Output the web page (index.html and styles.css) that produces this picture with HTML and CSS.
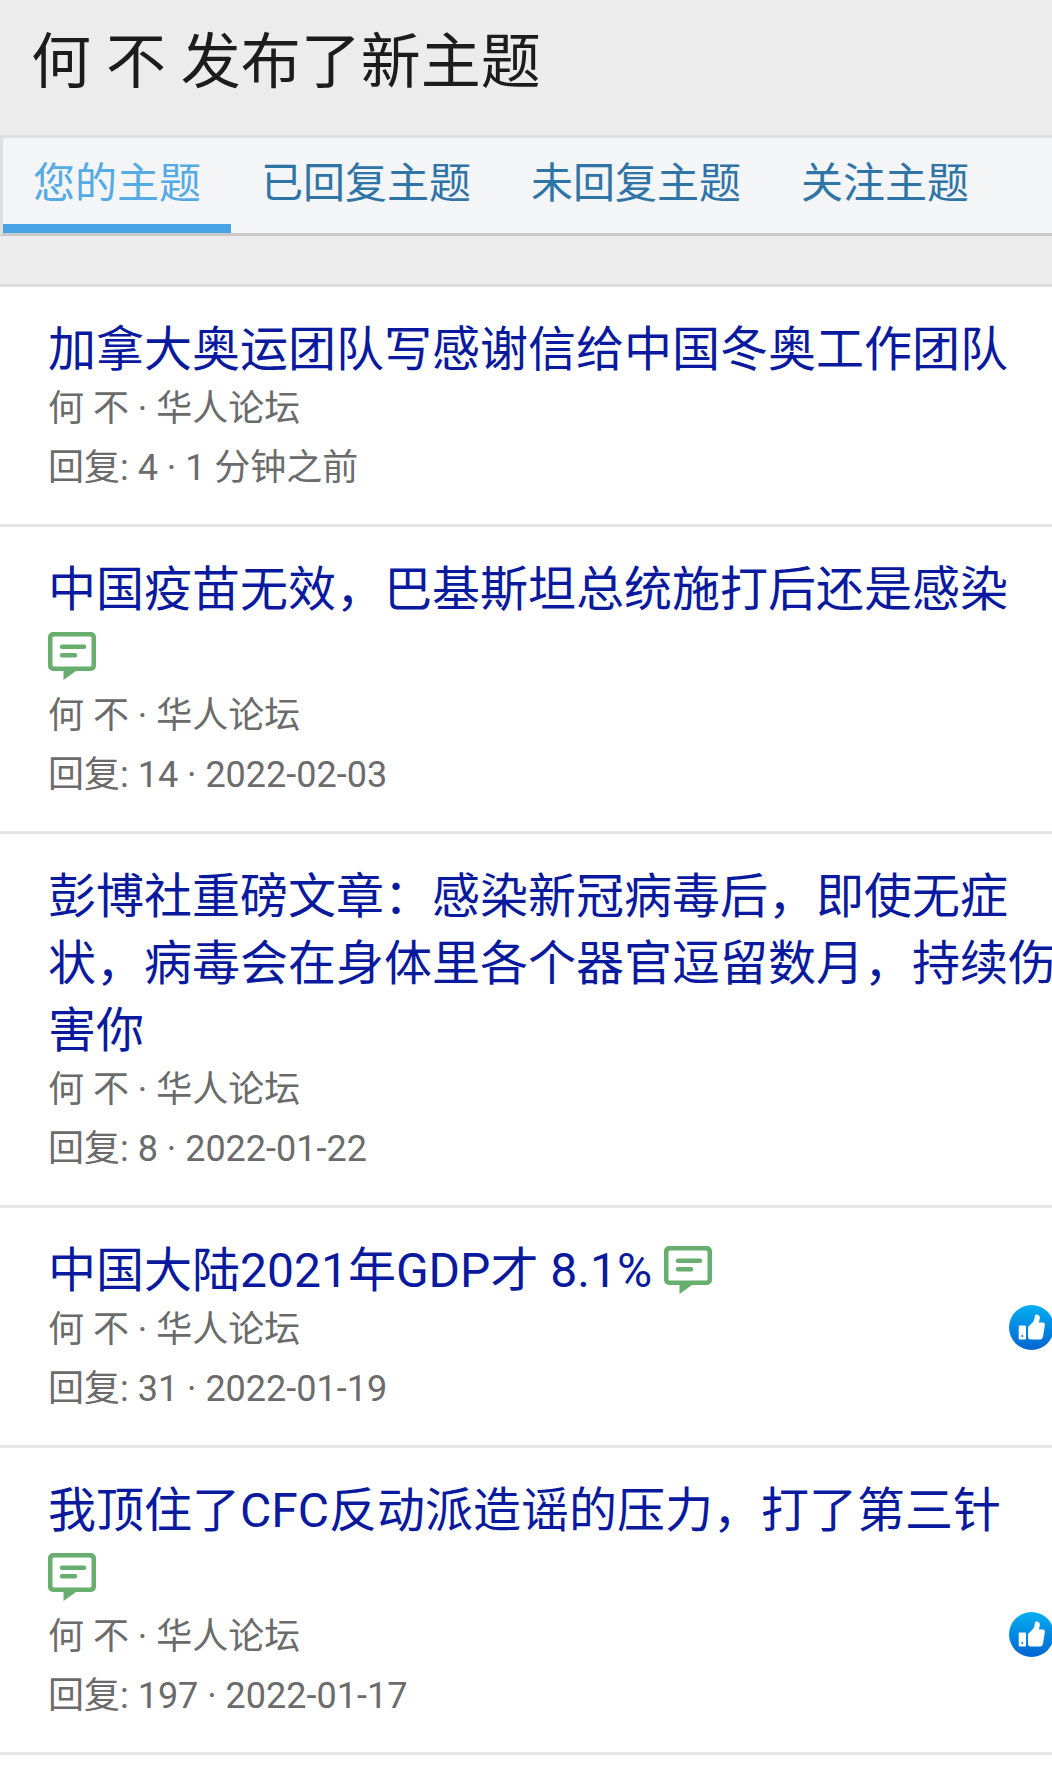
FILE: index.html
```html
<!DOCTYPE html>
<html lang="zh">
<head>
<meta charset="UTF-8" />
<title>何 不 发布了新主题</title>
<link rel="stylesheet" href="styles.css">
</head>
<body>
<svg class="defs" width="0" height="0">
  <defs>
    <linearGradient id="likeFill" x1="0" y1="0" x2="0" y2="1">
      <stop offset="0" stop-color="#04aef2"/>
      <stop offset="1" stop-color="#0065d1"/>
    </linearGradient>
    <symbol id="comment" viewBox="0 0 48 48">
      <path fill-rule="evenodd" fill="#68ae6e" d="M5 0h38a5 5 0 0 1 5 5v29a5 5 0 0 1-5 5H28L15.500 48v-9H5a5 5 0 0 1-5-5V5a5 5 0 0 1 5-5zM6 4.500a1.500 1.500 0 0 0-1.500 1.500v27a1.500 1.500 0 0 0 1.500 1.500h36a1.500 1.500 0 0 0 1.500-1.500V6A1.500 1.500 0 0 0 42 4.500z"/>
      <path d="M14 14.700h22M14 23.300h13" fill="none" stroke="#68ae6e" stroke-width="4.500" stroke-linecap="round"/>
    </symbol>
    <symbol id="like" viewBox="0 0 45 45">
      <circle cx="22.500" cy="22.500" r="22.500" fill="url(#likeFill)"/>
      <rect x="9.700" y="20.500" width="7.300" height="14" rx="1" fill="#fff"/>
      <circle cx="13.300" cy="31" r="1" fill="#0a7ad8"/>
      <path d="M19 22l5-5c1.200-1.500 1.500-4 2-6.500 .3-1.500 4.500-1.500 4.800 1.800 .1 2-.5 3.800-1 5.200h4c1.800 0 2.400 1.500 2 3l-1.800 11c-.3 1.800-1.200 3-3 3H22c-2 0-3-1-3-3z" fill="#fff"/>
    </symbol>
  </defs>
</svg>

<h1 class="page-title">何 不 发布了新主题</h1>

<nav class="tabs">
  <a class="tab active">您的主题</a>
  <a class="tab">已回复主题</a>
  <a class="tab">未回复主题</a>
  <a class="tab">关注主题</a>
</nav>

<ul class="topics">
  <li class="topic">
    <a class="topic-title">加拿大奥运团队写感谢信给中国冬奥工作团队</a>
    <div class="meta">何 不 · 华人论坛</div>
    <div class="meta">回复: 4 · 1 分钟之前</div>
  </li>
  <li class="topic">
    <a class="topic-title">中国疫苗无效，巴基斯坦总统施打后还是感染 <svg class="icon-comment"><use href="#comment"/></svg></a>
    <div class="meta">何 不 · 华人论坛</div>
    <div class="meta">回复: 14 · 2022-02-03</div>
  </li>
  <li class="topic">
    <a class="topic-title">彭博社重磅文章：感染新冠病毒后，即使无症状，病毒会在身体里各个器官逗留数月，持续伤害你</a>
    <div class="meta">何 不 · 华人论坛</div>
    <div class="meta">回复: 8 · 2022-01-22</div>
  </li>
  <li class="topic">
    <a class="topic-title">中国大陆2021年GDP才 8.1% <svg class="icon-comment"><use href="#comment"/></svg></a>
    <div class="meta has-like">何 不 · 华人论坛<svg class="icon-like"><use href="#like"/></svg></div>
    <div class="meta">回复: 31 · 2022-01-19</div>
  </li>
  <li class="topic">
    <a class="topic-title">我顶住了CFC反动派造谣的压力，打了第三针 <svg class="icon-comment"><use href="#comment"/></svg></a>
    <div class="meta has-like">何 不 · 华人论坛<svg class="icon-like"><use href="#like"/></svg></div>
    <div class="meta">回复: 197 · 2022-01-17</div>
  </li>
</ul>
</body>
</html>
```
FILE: styles.css
```css
html {
  background: #fff;
}
body {
  margin: 0;
  height: 1769px;
  overflow: hidden;
  background: #fff;
  font-family: Roboto, "Noto Sans CJK SC", sans-serif;
}
.defs {
  position: absolute;
}
.page-title {
  margin: 0;
  height: 135px;
  padding: 30px 0 0 31px;
  box-sizing: border-box;
  background: #ececec;
  color: #1c1c1c;
  font-size: 60px;
  font-weight: 400;
  line-height: 66px;
}
.tabs {
  display: flex;
  height: 101px;
  box-sizing: border-box;
  background: #f4f5f6;
  border-top: 3px solid #dfdfdf;
  border-bottom: 3px solid #c9c9c9;
  border-left: 3px solid #dfdfdf;
}
.tab {
  padding: 0 30px;
  color: #2f74a6;
  font-size: 42px;
  line-height: 91px;
}
.tab.active {
  height: 95px;
  box-sizing: border-box;
  color: #54aae4;
  border-bottom: 9px solid #48a3e4;
}
.topics {
  margin: 0 -6px 0 0;
  padding: 0;
  list-style: none;
  background: #fff;
}
.topics::before {
  content: "";
  display: block;
  height: 48px;
  background: #ececec;
  border-bottom: 3px solid #dfdfdf;
}
.topic {
  padding: 29px 0 26px 48px;
  border-bottom: 3px solid #e6e6e6;
}
.topic-title {
  display: block;
  margin-bottom: -3px;
  color: #0a1a9e;
  font-size: 48px;
  line-height: 67px;
}
.icon-comment {
  width: 48px;
  height: 48px;
  margin-bottom: 10px;
  vertical-align: -17px;
}
.meta {
  color: #6b6b6b;
  font-size: 36px;
  line-height: 59px;
}
.has-like {
  position: relative;
}
.icon-like {
  position: absolute;
  top: 4px;
  right: 4px;
  width: 45px;
  height: 45px;
}
```
